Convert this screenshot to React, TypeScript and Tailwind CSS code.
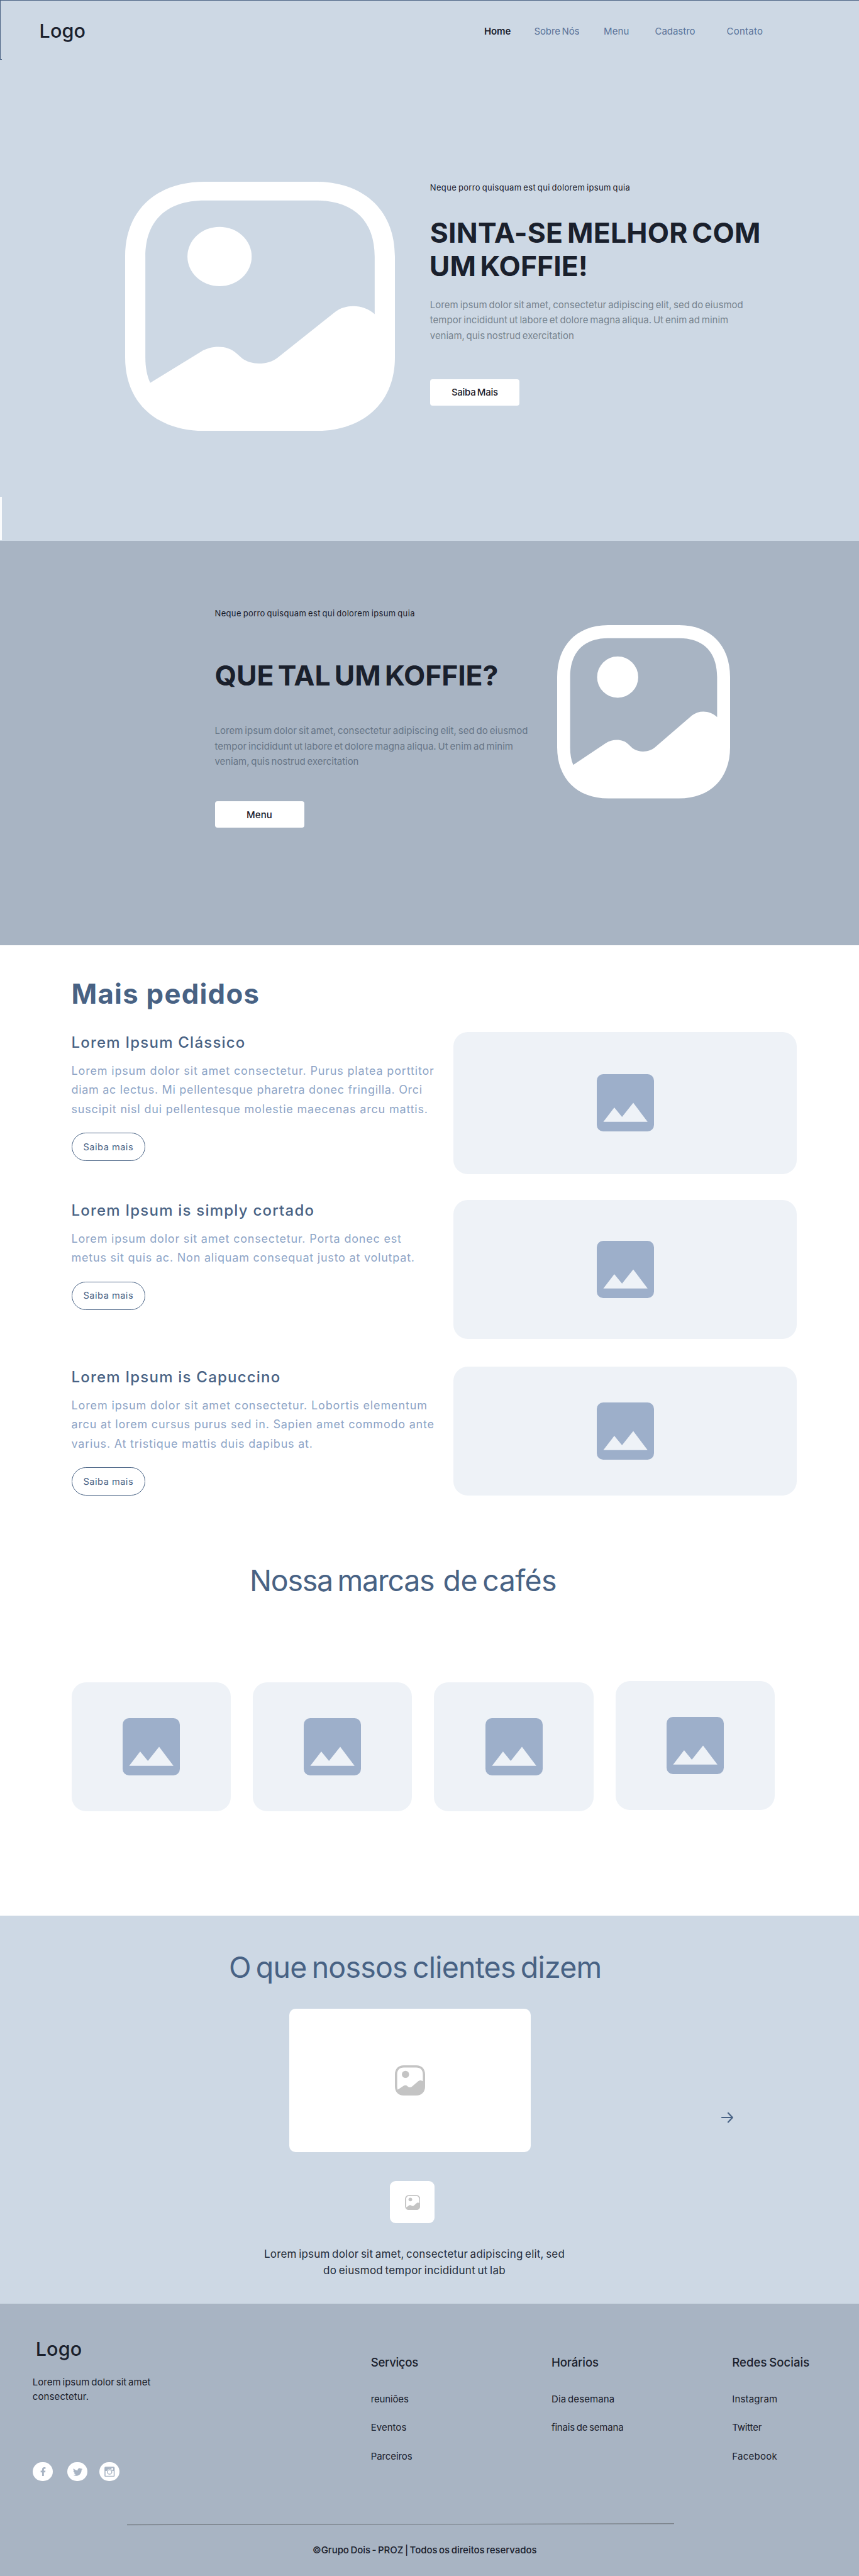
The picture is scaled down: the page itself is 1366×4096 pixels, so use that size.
import type { ReactNode } from 'react'
import { FaFacebookF, FaTwitter } from 'react-icons/fa'

function Line({ children, className = '' }: { children: ReactNode; className?: string }) {
  return <span className={`block whitespace-nowrap ${className}`}>{children}</span>
}

/* Rounded landscape placeholder; stretches to its box. */
function Landscape({ className }: { className: string }) {
  return (
    <svg viewBox="0 0 100 100" preserveAspectRatio="none" className={`shrink-0 ${className}`} fill="currentColor">
      <path
        fillRule="evenodd"
        d="M29.5 0H70.5C88.5 0 100 11.5 100 30V70.5C100 88.5 88.5 100 70.5 100H29.5C11.5 100 0 88.5 0 70.5V30C0 11.5 11.5 0 29.5 0Z
           M29.5 7.5C15.5 7.5 7.5 15.5 7.5 30V70.5C7.5 74.5 8.1 77.8 9.3 80.7L28.2 68.1C32.2 65.5 38 65.6 41.1 68.7L43.5 71C47 73.7 53 73.6 56.6 70.5L78 52.1C82.2 48.8 88.6 49.3 92.5 53.1V30C92.5 15.5 84.5 7.5 70.5 7.5Z"
      />
      <circle cx="35" cy="30" r="11.9" />
    </svg>
  )
}

function Mountains() {
  return (
    <svg viewBox="0 0 96 96" className="size-[91px]">
      <rect width="96" height="96" rx="10.7" fill="#9dafca" />
      <path d="M11 80L29.4 56L42.4 71.7L61.2 48L85.3 80Z" fill="#eef2f7" />
    </svg>
  )
}

function PictureCard({ className }: { className: string }) {
  return (
    <div className={`flex items-center justify-center rounded-[22.8px] bg-[#eef2f7] ${className}`}>
      <Mountains />
    </div>
  )
}

function OutlineButton() {
  return (
    <button className="flex h-[45.4px] w-[117.6px] items-center justify-center rounded-[22.8px] border border-[#486284] pt-[2px] text-[14.6px] tracking-[0.49px] text-[#486284]">
      Saiba mais
    </button>
  )
}

const eyebrow = 'text-[13px] leading-[18px] tracking-[0.34px] text-[#1a202c] [word-spacing:-0.09em]'
const display = 'text-[44.5px] leading-[53.1px] font-bold text-[#1a202c] [word-spacing:-0.09em]'
const solidButton =
  'flex h-[42px] w-[142px] items-center justify-center rounded-[4px] bg-white pt-[2px] text-[15px] font-medium text-[#1a202c] [word-spacing:-0.09em]'

function Intro({ className }: { className: string }) {
  return (
    <p className={`text-[15px] leading-[24.66px] [word-spacing:-0.09em] ${className}`}>
      <Line className="tracking-[0.04px]">Lorem ipsum dolor sit amet, consectetur adipiscing elit, sed do eiusmod</Line>
      <Line className="tracking-[0.02px]">tempor incididunt ut labore et dolore magna aliqua. Ut enim ad minim</Line>
      <Line className="tracking-[-0.04px]">veniam, quis nostrud exercitation</Line>
    </p>
  )
}

const products = [
  {
    title: 'Lorem Ipsum Clássico',
    lines: [
      'Lorem ipsum dolor sit amet consectetur. Purus platea porttitor',
      'diam ac lectus. Mi pellentesque pharetra donec fringilla. Orci',
      'suscipit nisl dui pellentesque molestie maecenas arcu mattis.',
    ],
    tracks: ['tracking-[0.83px]', 'tracking-[0.68px]', 'tracking-[0.81px]'],
    row: 'h-[225.7px]',
  },
  {
    title: 'Lorem Ipsum is simply cortado',
    lines: [
      'Lorem ipsum dolor sit amet consectetur. Porta donec est',
      'metus sit quis ac. Non aliquam consequat justo at volutpat.',
    ],
    tracks: ['tracking-[0.8px]', 'tracking-[0.78px]'],
    row: 'h-[220.9px] mt-[41.3px]',
  },
  {
    title: 'Lorem Ipsum is Capuccino',
    lines: [
      'Lorem ipsum dolor sit amet consectetur. Lobortis elementum',
      'arcu at lorem cursus purus sed in. Sapien amet commodo ante',
      'varius. At tristique mattis duis dapibus at.',
    ],
    tracks: ['tracking-[0.87px]', 'tracking-[0.77px]', 'tracking-[0.78px]'],
    row: 'h-[205px] mt-[44.1px]',
  },
]

const footerColumns = [
  {
    title: 'Serviços',
    track: 'tracking-[-0.32px]',
    items: [
      ['reuniões', 'tracking-[-0.14px]'],
      ['Eventos', 'tracking-[0.03px]'],
      ['Parceiros', 'tracking-[-0.09px]'],
    ],
  },
  {
    title: 'Horários',
    track: 'tracking-[-0.16px]',
    items: [
      ['Dia desemana', 'tracking-[0.1px]'],
      ['finais de semana', 'tracking-[-0.15px]'],
    ],
  },
  {
    title: 'Redes Sociais',
    track: 'tracking-[0.04px]',
    items: [
      ['Instagram', 'tracking-[0.15px]'],
      ['Twitter', 'tracking-[-0.22px]'],
      ['Facebook', 'tracking-[0.27px]'],
    ],
  },
]

function Social({ children, className = '' }: { children: ReactNode; className?: string }) {
  return (
    <span className={`flex h-[30.4px] w-[31.9px] items-center justify-center rounded-full bg-white text-[#a8b4c3] ${className}`}>
      {children}
    </span>
  )
}

export default function App() {
  return (
    <div className="h-[4096px] w-[1366px] overflow-hidden bg-white font-['Inter',sans-serif]">
      <section className="relative h-[859.5px] bg-[#cdd8e4]">
        <div className="absolute top-0 left-0 h-[95px] w-full border-t border-[#4a6283]" />
        <div className="absolute top-0 left-0 h-[95px] w-px bg-[#4a6283]" />
        <div className="absolute top-[94px] left-0 h-px w-[3px] bg-[#4a6283]" />
        <div className="absolute bottom-px left-0 h-[68.5px] w-[3px] bg-[#fafbfc]" />

        <header className="flex h-[95px] items-start">
          <div className="mt-[31px] ml-[62.5px] w-[707.5px] text-[30.5px] leading-9 font-medium tracking-[0.14px] text-[#1a202c]">
            Logo
          </div>
          <nav className="mt-[40px] flex text-[15px] leading-5 text-[#587299] [word-spacing:-0.09em]">
            <a className="w-[79.5px] font-semibold tracking-[-0.11px] text-[#1a202c]">Home</a>
            <a className="w-[110.5px] tracking-[-0.14px]">Sobre Nós</a>
            <a className="w-[81.5px] tracking-[0.11px]">Menu</a>
            <a className="w-[114px] tracking-[-0.03px]">Cadastro</a>
            <a className="tracking-[0.25px]">Contato</a>
          </nav>
        </header>

        <div className="flex items-start pt-[193.7px] pl-[199px]">
          <Landscape className="h-[396.3px] w-[429px] text-white" />
          <div className="ml-[55.8px]">
            <Line className={`mt-[0.5px] ${eyebrow}`}>Neque porro quisquam est qui dolorem ipsum quia</Line>
            <h1 className={`mt-[36.7px] ${display}`}>
              <Line className="tracking-[0.19px]">SINTA-SE MELHOR COM</Line>
              <Line className="-ml-px tracking-[0.01px]">UM KOFFIE!</Line>
            </h1>
            <Intro className="mt-[22.6px] text-[#77848f]" />
            <button className={`mt-[56px] tracking-[-0.28px] ${solidButton}`}>Saiba Mais</button>
          </div>
        </div>
      </section>

      <section className="h-[643.8px] bg-[#a8b4c3]">
        <div className="flex items-start pt-[106.5px] pl-[341.5px]">
          <div className="w-[544.5px]">
            <Line className={eyebrow}>Neque porro quisquam est qui dolorem ipsum quia</Line>
            <h2 className={`mt-[63.5px] ${display}`}>
              <Line className="tracking-[-0.13px]">QUE TAL UM KOFFIE?</Line>
            </h2>
            <Intro className="mt-[49.5px] text-[#667486]" />
            <button className={`mt-[50px] tracking-[0.06px] ${solidButton}`}>Menu</button>
          </div>
          <Landscape className="mt-[28px] h-[275.5px] w-[275px] text-white" />
        </div>
      </section>

      <section className="h-[1542.4px] bg-white pt-[52px] pl-[113.5px]">
        <h2 className="text-[43.7px] leading-[52px] font-bold tracking-[1.27px] text-[#486284]">Mais pedidos</h2>
        <div className="mt-[33.8px]">
          {products.map((p) => (
            <div key={p.title} className={`flex ${p.row}`}>
              <div className="w-[607.5px] pt-[1.6px]">
                <h3 className="text-[24px] leading-[30px] font-medium tracking-[1.22px] text-[#486284]">{p.title}</h3>
                <p className="mt-[15.4px] mb-[21.8px] text-[18px] leading-[30.36px] text-[#8da4c6]">
                  {p.lines.map((l, i) => (
                    <Line key={l} className={p.tracks[i]}>
                      {l}
                    </Line>
                  ))}
                </p>
                <OutlineButton />
              </div>
              <PictureCard className="w-[546.4px]" />
            </div>
          ))}
        </div>

        <h2 className="mt-[107px] ml-[283.5px] flex text-[46.5px] leading-[56px] text-[#486284] [word-spacing:-0.09em]">
          <span className="w-[307.5px] tracking-[-1.24px]">Nossa marcas</span>
          <span className="tracking-[-0.58px]">de cafés</span>
        </h2>
        <div className="mt-[134.4px] flex gap-[35.2px]">
          <PictureCard className="h-[205px] w-[253.3px]" />
          <PictureCard className="h-[205px] w-[253.3px]" />
          <PictureCard className="h-[205px] w-[253.3px]" />
          <PictureCard className="-mt-[2.8px] h-[205px] w-[253.3px]" />
        </div>
      </section>

      <section className="flex h-[617.6px] items-start bg-[#cdd8e4] pt-[54.1px] pl-[364px]">
        <div className="flex w-[590px] flex-col items-center">
          <h2 className="w-full text-[46.5px] leading-[56px] whitespace-nowrap tracking-[-0.79px] text-[#486284] [word-spacing:-0.09em]">
            O que nossos clientes dizem
          </h2>
          <div className="mt-[37.9px] mr-[14px] flex h-[228.7px] w-[384.2px] items-center justify-center rounded-[10px] bg-white">
            <Landscape className="size-12 text-[#c4c4c4]" />
          </div>
          <div className="mt-[45.2px] mr-[7px] flex h-[67.5px] w-[70.2px] items-center justify-center rounded-[9px] bg-white pt-[1px] pl-[1.5px]">
            <Landscape className="size-[24.4px] text-[#c4c4c4]" />
          </div>
          <p className="mt-[36.6px] text-center text-[17px] leading-[25.9px] text-[#242c39] [word-spacing:-0.09em]">
            <Line className="tracking-[0.21px]">Lorem ipsum dolor sit amet, consectetur adipiscing elit, sed</Line>
            <Line className="tracking-[0.26px]">do eiusmod tempor incididunt ut lab</Line>
          </p>
        </div>
        <svg
          viewBox="0 0 20 18"
          className="mt-[258.5px] ml-[192px] h-[18px] w-5"
          fill="none"
          stroke="#486284"
          strokeWidth="2.2"
          strokeLinecap="round"
          strokeLinejoin="round"
        >
          <path d="M2 9H18.8M12 1.8L18.8 9L12 16.2" />
        </svg>
      </section>

      <footer className="h-[433px] bg-[#a8b4c3] text-[#1a202c] [word-spacing:-0.09em]">
        <div className="flex h-[349px] items-start">
          <div className="w-[589.7px] shrink-0 pt-[54px] pl-[51.7px]">
            <div className="ml-[5px] text-[30.5px] leading-9 font-medium tracking-[0.14px]">Logo</div>
            <p className="mt-[22.3px] text-[15px] leading-[23px]">
              <Line className="tracking-[0.04px]">Lorem ipsum dolor sit amet</Line>
              <Line className="tracking-[0.12px]">consectetur.</Line>
            </p>
            <div className="mt-[93.4px] flex pl-[0.6px]">
              <Social>
                <FaFacebookF className="h-[14.5px] w-[9.1px]" />
              </Social>
              <Social className="ml-[23px]">
                <FaTwitter className="size-[15.2px]" />
              </Social>
              <Social className="ml-[19.4px]">
                <svg viewBox="0 0 17 17" className="size-[16.5px]" fill="none" stroke="currentColor">
                  <rect x="1" y="1" width="15" height="15" rx="1" strokeWidth="1.6" />
                  <path d="M1 1.2H16V7.2H12.2A4.6 4.6 0 0 0 4.8 7.2H1Z" fill="currentColor" stroke="none" />
                  <circle cx="8.5" cy="8.8" r="4.9" fill="white" stroke="none" />
                  <circle cx="8.5" cy="8.8" r="3.7" fill="white" strokeWidth="1.4" />
                  <rect x="11.6" y="2.4" width="2.8" height="2.8" rx="0.5" fill="white" stroke="none" />
                </svg>
              </Social>
            </div>
          </div>
          {footerColumns.map((c) => (
            <div key={c.title} className="w-[287.3px] shrink-0 pt-[80.4px]">
              <h4 className={`text-[18.6px] leading-6 font-medium whitespace-nowrap ${c.track}`}>{c.title}</h4>
              <ul className="mt-[37px] flex flex-col gap-[25.6px] text-[15px] leading-5">
                {c.items.map(([label, track]) => (
                  <li key={label} className={track}>
                    {label}
                  </li>
                ))}
              </ul>
            </div>
          ))}
        </div>
        <svg viewBox="0 0 870 4" className="ml-[202px] h-1 w-[870px]">
          <path d="M0 2.7L870 0.8" stroke="#6b7075" strokeWidth="1" />
        </svg>
        <p className="mt-[28.3px] pl-[497px] text-[15px] leading-5 font-medium tracking-[-0.03px] whitespace-nowrap">
          ©Grupo Dois - PROZ | Todos os direitos reservados
        </p>
      </footer>
    </div>
  )
}
